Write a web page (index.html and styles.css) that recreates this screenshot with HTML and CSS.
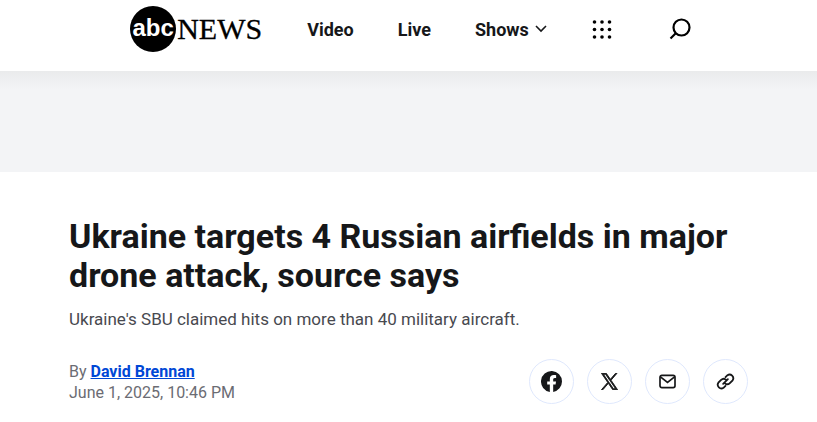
FILE: index.html
```html
<!DOCTYPE html>
<html lang="en">
<head>
    <meta charset="UTF-8">
    <meta name="viewport" content="width=device-width, initial-scale=1.0">
    <title>Ukraine targets 4 Russian airfields in major drone attack, source says - ABC News</title>
    <link rel="stylesheet" href="styles.css">
</head>
<body>
    <!-- Header -->
    <header class="header">
        <a href="#" class="logo">
            <span class="logo-circle">abc</span>
            <span class="logo-news">NEWS</span>
        </a>
        <nav class="nav">
            <a href="#">Video</a>
            <a href="#">Live</a>
            <button class="shows-button">Shows
                <svg width="12" height="8" viewBox="0 0 12 8" fill="none" stroke="currentColor" stroke-width="1.6"><path d="M1 1l5 5 5-5"/></svg>
            </button>
        </nav>
        <button class="icon-button" aria-label="More">
            <svg width="20" height="20" viewBox="0 0 20 20">
                <circle cx="2.500" cy="3" r="1.8"/><circle cx="10" cy="3" r="1.8"/><circle cx="17.500" cy="3" r="1.8"/>
                <circle cx="2.500" cy="10.500" r="1.8"/><circle cx="10" cy="10.500" r="1.8"/><circle cx="17.500" cy="10.500" r="1.8"/>
                <circle cx="2.500" cy="18" r="1.8"/><circle cx="10" cy="18" r="1.8"/><circle cx="17.500" cy="18" r="1.8"/>
            </svg>
        </button>
        <button class="icon-button search-button" aria-label="Search">
            <svg width="22" height="22" viewBox="0 0 22 22" fill="none" stroke="#000" stroke-width="2.2"><circle cx="12.5" cy="9.5" r="8"/><path d="M7 15l-5.500 5.500"/></svg>
        </button>
    </header>

    <!-- Ad slot -->
    <div class="ad-banner"></div>

    <main class="article">
        <h1>Ukraine targets 4 Russian airfields in major drone attack, source says</h1>
        <p class="summary">Ukraine's SBU claimed hits on more than 40 military aircraft.</p>
        <div class="meta">
            <div class="byline">
                <div>By <a href="#">David Brennan</a></div>
                <div>June 1, 2025, 10:46 PM</div>
            </div>
            <div class="share">
                <button aria-label="Share on Facebook">
                    <svg width="21" height="21" viewBox="0 0 20 20"><path fill="currentColor" d="M20 10A10 10 0 1 0 8.400 19.900V12.900H5.900V10h2.500V7.800c0-2.500 1.500-3.900 3.800-3.900 1.100 0 2.200.2 2.200.2v2.500h-1.200c-1.300 0-1.600.8-1.600 1.600V10h2.700l-.4 2.900h-2.300v7A10 10 0 0 0 20 10z"/></svg>
                </button>
                <button aria-label="Share on X">
                    <svg width="17" height="17" viewBox="-20 -20 1240 1267"><path fill="currentColor" stroke="currentColor" stroke-width="70" d="M714 519L1161 0H1055L667 451L357 0H0L469 682L0 1227H106L516 750L843 1227H1200L714 519ZM569 688L521 620L144 80H307L612 516L660 584L1055 1150H892L569 688Z"/></svg>
                </button>
                <button aria-label="Share by email">
                    <svg width="17" height="15" viewBox="0 0 18 16" fill="none" stroke="currentColor" stroke-width="1.800"><rect x="1" y="1.500" width="16" height="13" rx="2"/><path d="M1.500 3L9 9l7.500-6"/></svg>
                </button>
                <button aria-label="Copy link">
                    <svg width="19" height="19" viewBox="0 0 24 24" fill="none" stroke="currentColor" stroke-width="2.300" stroke-linecap="round"><path d="M12 17.500l-2.500 2.500a4.700 4.700 0 0 1-6.500-6.500l3.500-3.500a4.700 4.700 0 0 1 6.500 0"/><path d="M12 6.500l2.500-2.500a4.700 4.700 0 0 1 6.500 6.500l-3.500 3.500a4.700 4.700 0 0 1-6.500 0"/><path d="M9 15l6-6"/></svg>
                </button>
            </div>
        </div>
    </main>
</body>
</html>
```
FILE: styles.css
```css
body {
    margin: 0;
    background-color: #fff;
    color: #161719;
    font-family: Roboto, "Liberation Sans", sans-serif;
}

button {
    padding: 0;
    border: none;
    background: none;
    color: inherit;
    font: inherit;
    cursor: pointer;
}

svg {
    display: block;
}

/* Header styles */
.header {
    display: flex;
    justify-content: center;
    gap: 45px;
    padding: 6px 8px 19px 12px;
    align-items: center;
}

.logo {
    display: flex;
    align-items: center;
    gap: 1px;
    color: #000;
    text-decoration: none;
}

.logo-circle {
    width: 46px;
    height: 46px;
    border-radius: 50%;
    background-color: #000;
    color: #fff;
    font: bold 24px/44px "Liberation Sans", sans-serif;
    text-align: center;
}

.logo-news {
    font: 30px/46px "Liberation Serif", serif;
    -webkit-text-stroke: 0.3px #000;
}

.nav {
    display: flex;
    gap: 44px;
    font-size: 18px;
    font-weight: bold;
}

.nav a {
    color: inherit;
    text-decoration: none;
}

.shows-button {
    display: flex;
    align-items: center;
    gap: 6px;
}

.search-button {
    margin-left: 12px;
}

.ad-banner {
    height: 101px;
    background: linear-gradient(#eaebec, #f3f4f6 18px);
}

/* Article styles */
.article {
    padding: 45px 69px 18px;
}

h1 {
    margin: 0;
    font-size: 34px;
    line-height: 39px;
}

.summary {
    margin: 12px 0 28px;
    color: #48494f;
    font-size: 17px;
    line-height: 24px;
}

.meta {
    display: flex;
    justify-content: space-between;
    align-items: center;
}

.byline {
    color: #6b6c73;
    font-size: 16px;
    line-height: 21px;
}

.byline a {
    color: #0047d6;
    font-weight: bold;
}

/* Round share buttons */
.share {
    display: flex;
    gap: 13px;
}

.share button {
    display: flex;
    justify-content: center;
    align-items: center;
    width: 45px;
    height: 45px;
    border: 1px solid #dfe8fd;
    border-radius: 50%;
}
```
